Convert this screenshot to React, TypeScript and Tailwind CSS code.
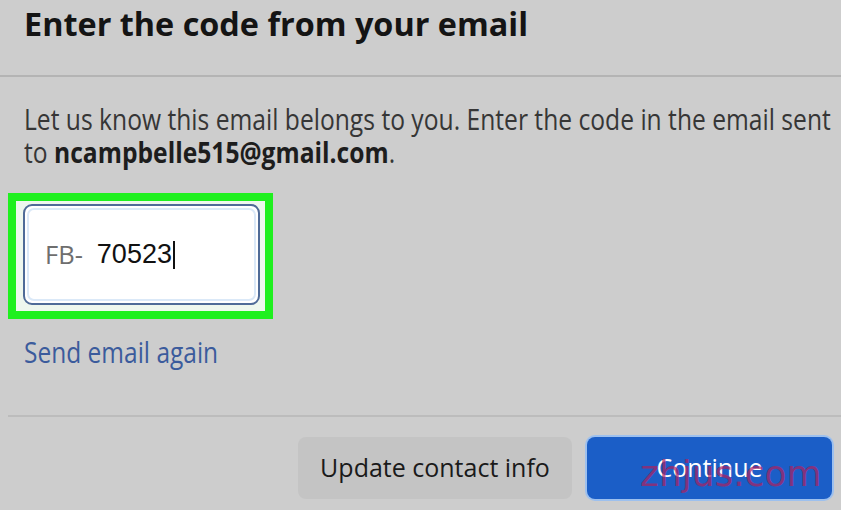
import React from "react";

export default function App() {
  return (
    <div className="relative w-[841px] h-[510px] overflow-hidden bg-[#cdcdcd] font-['Open_Sans',sans-serif]">
      {/* Header */}
      <div className="h-[75px] pl-[24px] pt-[1px]">
        <h1 className="text-[32.4px] leading-[45px] font-bold text-[#141414]">
          Enter the code from your email
        </h1>
      </div>
      <div className="h-[2px] bg-[#b4b4b4]" />

      {/* Body */}
      <div className="pl-[24px] pt-[26px]">
        <div className="origin-left scale-x-[0.838] text-[29.4px] leading-[33px] text-[#363636] whitespace-nowrap">
          <div>Let us know this email belongs to you. Enter the code in the email sent</div>
          <div>
            to <span className="font-bold text-[#1d1d1d]">ncampbelle515@gmail.com</span>.
          </div>
        </div>
      </div>

      <div className="mt-[24px] ml-[8px] w-[265px] h-[126px] border-[8px] border-[#1ff01f] bg-[#eef7ee] pt-[3px] pl-[7px] pr-[5px] pb-[6px]">
        <div className="h-full rounded-[9px] border-[2px] border-[#4f6b98] bg-white p-[2px]">
          <div className="flex h-full items-center rounded-[7px] border-[2px] border-[#dbe9f8] pl-[16px]">
            <span className="text-[25.5px] leading-none text-[#6e6e6e]">FB-</span>
            <span className="ml-[14px] text-[27px] leading-none text-[#111] font-['Liberation_Sans',sans-serif]">
              70523
            </span>
            <span className="ml-[1px] w-[2px] h-[28px] bg-[#111]" />
          </div>
        </div>
      </div>

      <div className="pl-[24px] pt-[16px] h-[96px]">
        <div className="origin-left scale-x-[0.845] text-[29px] leading-[33px] text-[#3b5b9c] whitespace-nowrap">
          Send email again
        </div>
      </div>

      <div className="ml-[8px] h-[2px] bg-[#bcbcbc]" />

      <div className="flex justify-end gap-[15px] pt-[20px] pr-[9px]">
        <button className="w-[274px] h-[62px] rounded-[8px] bg-[#c4c4c4] text-[25px] font-medium text-[#1a1a1a]">
          Update contact info
        </button>
        <button className="w-[245px] h-[62px] rounded-[8px] bg-[#1b5ec7] ring-2 ring-[#9dc0ee] text-[25px] font-medium text-white">
          Continue
        </button>
      </div>

      {/* watermark */}
      <div className="absolute left-[640px] top-[452px] text-[36px] leading-[44px] font-['DejaVu_Sans',sans-serif] text-[#b0205e]/70 pointer-events-none">
        zhjus.com
      </div>
    </div>
  );
}
